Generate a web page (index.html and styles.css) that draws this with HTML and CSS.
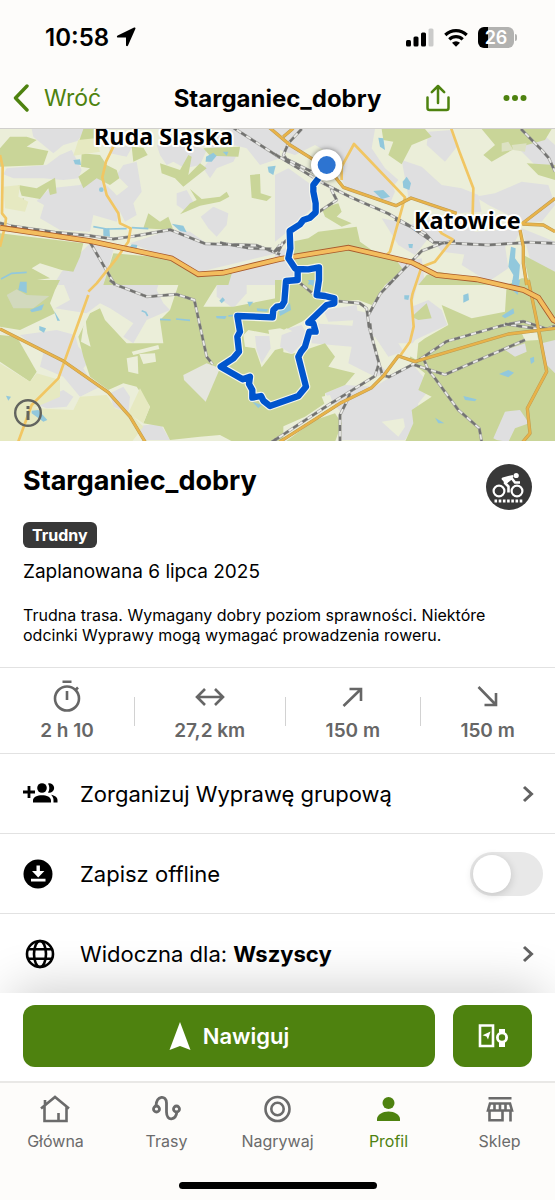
FILE: index.html
```html
<!DOCTYPE html>
<html lang="pl">
<head>
<meta charset="utf-8">
<meta name="viewport" content="width=device-width, initial-scale=1">
<title>Starganiec_dobry</title>
<link rel="stylesheet" href="styles.css">
</head>
<body>
<div class="screen">
  <header class="top">
    <div class="status">
      <div class="status-left">
        <span class="clock">10:58</span>
        <svg width="20" height="20" viewBox="0 0 20 20"><path d="M19.200.8c.5.300.3.800 0 1.500L12 18.600c-.4.900-2 .7-2-.3V10.600H2.200c-1.500 0-1.800-1.600-.5-2.200L17.600.8c.8-.4 1.300-.3 1.600 0z"/></svg>
      </div>
      <div class="status-right">
        <svg width="28" height="19" viewBox="0 0 28 19"><rect x="0" y="12" width="5" height="6.500" rx="1.500"/><rect x="7.500" y="8.500" width="5" height="10" rx="1.500"/><rect x="15" y="4.500" width="5" height="14" rx="1.500"/><rect x="22.500" y="0.500" width="5" height="18" rx="1.500" fill="#cbcbca"/></svg>
        <svg width="24" height="19" viewBox="0 0 24 19"><g fill="none" stroke="#000" stroke-width="3.200"><path d="M1.300 7A15.500 15.500 0 0 1 22.700 7"/><path d="M5.300 11.300a9.700 9.700 0 0 1 13.400 0"/></g><path d="M12 18.800 8 14.800a5.700 5.700 0 0 1 8 0z"/></svg>
        <span class="battery"><span class="battery-level">26</span></span>
      </div>
    </div>
    <nav class="navbar">
      <button class="back" type="button">
        <svg width="16" height="28" viewBox="0 0 16 28"><path d="M14 2 2.500 14 14 26" fill="none" stroke="currentColor" stroke-width="3.400" stroke-linecap="round" stroke-linejoin="round"/></svg>
        <span>Wróć</span>
      </button>
      <h1 class="nav-title">Starganiec_dobry</h1>
      <div class="nav-actions">
        <button type="button" aria-label="Udostępnij"><svg width="24" height="28" viewBox="0 0 24 28"><g fill="none" stroke="currentColor" stroke-width="2.500" stroke-linejoin="round" stroke-linecap="round"><path d="M1.500 13.500V24a2 2 0 0 0 2 2h17a2 2 0 0 0 2-2V13.500M12 19V2M5.800 8.200 12 2l6.200 6.200"/></g></svg></button>
        <button type="button" aria-label="Więcej"><svg width="24" height="8" viewBox="0 0 24 8"><g fill="currentColor"><circle cx="3.500" cy="4" r="3"/><circle cx="12" cy="4" r="3"/><circle cx="20.500" cy="4" r="3"/></g></svg></button>
      </div>
    </nav>
  </header>

  <main>
    <section class="map" aria-label="Mapa trasy">
      <svg class="map-canvas" viewBox="0 387 1665 936" preserveAspectRatio="xMidYMid slice">
        <rect y="380" width="1665" height="950" fill="#ebeed9"/>
        <g class="town">
          <g transform="translate(0 375)">
            <path d="M95 12 260 12 232 48 190 60 160 85 130 60 100 35z"/>
            <path d="M20 130 140 120 180 90 215 75 245 135 235 160 190 165 130 160 95 160 40 160 10 148z"/>
            <path d="M150 190 240 180 285 150 340 200 370 235 350 290 280 270 270 320 180 315 120 280 132 240 110 228z"/>
            <path d="M350 150 370 120 410 110 425 200 400 235 410 270 375 290 340 220 385 185z"/>
            <path d="M320 40 350 70 400 60 380 95 330 85z"/>
            <path d="M470 60 560 55 620 75 600 120 555 130 520 110 500 120 480 90z"/>
            <path d="M620 15 690 12 840 12 840 100 780 120 740 70 700 60 670 90 620 60z"/>
            <path d="M640 90 720 70 700 110 650 130 630 160 610 130z"/>
            <path d="M530 205 560 195 580 230 560 260 530 240z"/>
            <path d="M602 275 640 245 685 265 680 300 650 335 625 310z"/>
            <path d="M390 355 510 315 570 320 620 355 760 360 830 385 600 440 510 400z"/>
            <path d="M185 440 270 355 340 375 310 480 160 480z"/>
            <path d="M700 430 840 395V480H680z"/>
          </g>
          <g transform="translate(825 375)">
            <path d="M0 12 300 12 290 70 330 130 370 165 350 190 210 180 190 100 120 60 60 90 0 70z"/>
            <path d="M0 150 40 130 110 180 110 250 50 310 0 350z"/>
            <path d="M170 110 230 75 330 130 360 200 345 235 220 200z"/>
            <path d="M460 20 530 15 550 60 510 110 455 60z"/>
            <path d="M380 105 440 125 500 180 560 190 610 210 620 260 540 265 470 250 400 215z"/>
            <path d="M600 215 660 205 740 170 820 180 840 240 800 290 740 290 640 240z"/>
            <path d="M690 30 790 15 840 60 840 130 780 120z"/>
            <path d="M400 300 520 270 600 320 740 310 720 350 620 395 500 380 470 340z"/>
            <path d="M570 380 690 360 700 430 640 470 560 420z"/>
            <path d="M320 280 420 300 460 340 420 390 370 360z"/>
            <path d="M740 310 840 350 840 470 770 420z"/>
            <path d="M0 385 40 365 65 440 65 480 0 480z"/>
            <path d="M330 480 370 415 440 400 450 480z"/>
          </g>
          <g transform="translate(0 840)">
            <path d="M190 10 380 0 480 0 470 30 490 70 510 90 440 120 400 190 370 170 400 130 330 85 300 70 260 100 165 85 210 60z"/>
            <path d="M60 165 170 150 225 165 235 200 270 240 250 265 270 300 300 320 240 350 190 290 120 260 130 220z"/>
            <path d="M100 370 190 330 220 350 200 380 140 385z"/>
            <path d="M330 340 370 320 390 350 385 400 340 380z"/>
            <path d="M400 440 480 430 510 480 430 480z"/>
            <path d="M650 0 740 0 740 40 700 85 650 50z"/>
            <path d="M0 205 20 210 0 225z"/>
          </g>
          <g transform="translate(825 840)">
            <path d="M350 0 430 0 410 80 460 60 500 90 517 135 420 180 400 210 340 230 300 170 260 180 230 150 240 90 280 100z"/>
            <path d="M0 155 80 135 100 170 50 220 20 200z"/>
            <path d="M145 90 245 75 250 120 160 125z"/>
            <path d="M110 130 280 140 310 250 340 280 300 290 220 250 230 200 110 190z"/>
            <path d="M150 340 210 315 300 320 410 250 470 320 430 370 420 430 390 480 200 480 200 400z"/>
          </g>
        </g>
        <g class="wood">
          <g transform="translate(0 375)">
            <path d="M0 70 30 35 80 35 110 45 80 65 145 78 130 120 0 125z"/>
            <path d="M55 180 110 190 165 158 170 205 150 210 145 190 120 222 65 212z"/>
            <path d="M40 230 72 220 68 245 45 248z"/>
            <path d="M245 85 300 90 320 120 350 135 358 160 330 180 290 160 250 190 235 155 270 130 243 125z"/>
            <path d="M250 12 290 12 280 60 235 55z"/>
            <path d="M395 65 430 68 443 90 400 110z"/>
            <path d="M480 115 540 135 565 90 575 95 565 150 600 115 620 130 550 185 525 160 485 145z"/>
            <path d="M570 192 605 222 660 215 680 200 688 215 660 230 600 242 540 268 570 235 590 225z"/>
            <path d="M750 150 780 147 782 205 815 215 800 228 755 218z"/>
            <path d="M610 70 720 65 715 95 630 92z"/>
            <path d="M430 310 445 265 480 290 505 275 520 315z"/>
            <path d="M0 325 250 355 240 395 220 440 185 435 120 415 95 430 150 460 0 480z"/>
            <path d="M340 385 515 400 600 445 700 430 685 480 310 480z"/>
          </g>
          <g transform="translate(825 375)">
            <path d="M320 12 450 12 470 35 410 60 380 118 340 90 355 50 325 45z"/>
            <path d="M620 12 830 12 810 45 720 70 650 110 625 90 660 60z"/>
            <path d="M755 115 840 120 840 165 790 150z"/>
            <path d="M150 275 140 250 190 235 200 260 185 275 230 295 200 305z"/>
            <path d="M50 350 100 340 130 320 245 305 255 350 290 375 360 400 385 435 330 480 60 480z"/>
            <path d="M455 450 490 440 700 480 430 480z"/>
            <path d="M745 390 840 440 840 480 765 480z"/>
          </g>
          <g transform="translate(0 840)">
            <path d="M0 0 180 0 165 30 150 70 165 100 60 150 0 140z"/>
            <path d="M0 165 50 170 90 240 110 275 90 305 0 245z"/>
            <path d="M270 100 300 85 315 120 380 190 490 190 480 120 510 90 540 0 660 0 610 80 700 80 850 50 850 486H700L660 465 600 470 510 480 490 440 430 430 450 380 410 320 370 310 325 330 270 290 250 230 235 170z"/>
            <path d="M160 455 175 450 170 486 155 470z"/>
            <path d="M350 460 360 450 358 486h-8z"/>
          </g>
          <g transform="translate(825 840)">
            <path d="M0 0 340 0 290 75 250 60 180 65 120 100 80 125 0 165z"/>
            <path d="M0 190 20 215 50 222 90 210 150 190 180 230 160 260 240 280 210 315 150 340 150 370 90 410 0 450z"/>
            <path d="M450 175 520 135 500 75 590 115 690 95 695 15 740 -5 840 -5 840 486 390 486 415 430 410 390 470 350 430 330 450 280 400 240 430 190z"/>
            <path d="M410 110 455 70 470 115 430 120z"/>
            <path d="M120 420 180 400 200 430 180 486 30 486z"/>
          </g>
        </g>
        <g class="field">
          <g transform="translate(0 375)">
            <path d="M10 185 60 180 55 215 85 230 75 260 15 250z"/>
            <path d="M235 45 285 40 300 80 220 92z"/>
          </g>
          <g transform="translate(0 840)">
            <path d="M0 250 90 305 110 280 180 300 180 350 100 385 220 390 240 350 320 345 345 385 390 400 430 440 395 486H0z"/>
            <path d="M385 400 420 325 450 380 430 430z"/>
          </g>
        </g>
        <g class="glade">
          <g transform="translate(0 840)">
            <path d="M243 185 255 105 262 160 272 200z"/>
            <path d="M395 215 475 195 478 207 400 225z"/>
            <path d="M380 235 413 228 415 282 385 275z"/>
            <path d="M418 222 465 220 468 245 430 252z"/>
            <path d="M550 285 620 250 660 265 617 365 552 300z" fill="#e5e6de"/>
            <path d="M20 45 50 28 80 45 148 48 100 85 40 85z" fill="#d2d9bd"/>
            <path d="M730 165 745 150 825 165 860 145 890 160 845 205 825 210 785 262 765 205 735 200z"/>
            <path d="M805 150 840 145 870 155 840 172 808 165z"/>
          </g>
          <g transform="translate(825 840)">
            <path d="M320 425 385 415 390 440 370 470z"/>
            <path d="M140 350 165 345 180 385 150 375z"/>
            <path d="M370 190 430 190 425 240 390 220z"/>
            <path d="M740 158 785 155 790 180 750 182z"/>
          </g>
          <path d="M1505 430 1525 425 1540 450 1505 455z M1535 435 1580 430 1575 455 1540 450z" fill="#dce1c2"/>
        </g>
        <g class="town">
          <path d="M765 1008 808 1008 812 1045 785 1090 770 1050z"/>
          <g transform="translate(825 840)">
            <path d="M20 165 75 145 95 175 50 222 15 200z"/>
            <path d="M655 475 690 395 735 390 762 430 720 445 700 486 665 480z"/>
            <path d="M690 210 750 190 755 215 720 230z"/>
            <path d="M800 190 840 180 840 280 810 250z"/>
          </g>
        </g>
        <g class="water">
          <g transform="translate(0 375)">
            <path d="M220 105 240 103 243 120 225 118z"/><circle cx="304" cy="194" r="7"/>
            <path d="M618 95 640 83 650 92 635 110 617 110z"/><path d="M668 80 685 80 680 92z"/><path d="M803 125 827 122 820 150 806 142z"/>
            <path d="M515 296 550 302 560 322 540 318z"/><path d="M395 358 412 360 410 370 390 366z"/><path d="M310 312 328 310 330 335 310 332z"/>
            <path d="M280 305 320 312 380 311M395 308 445 311M3 462 35 445 80 442" class="stream"/>
          </g>
          <g transform="translate(825 375)">
            <path d="M310 38 325 40 330 75 315 65z"/><path d="M383 170 395 155 408 175 403 195 385 188z"/><path d="M295 198 325 195 345 215 320 222z"/>
            <path d="M400 357 414 357 412 370 402 368z"/><path d="M708 365 722 370 720 400 735 420 730 480 710 480 715 450 700 425z"/>
            <path d="M105 465 115 465 112 480 98 478z"/>
          </g>
          <g transform="translate(0 840)">
            <path d="M60 5 80 5 80 40 55 30z"/><path d="M90 90 132 72 125 90 95 97z"/><path d="M162 92 180 122 172 122z"/><path d="M118 138 138 145 132 158 118 150z"/>
            <path d="M95 392 115 390 142 420 130 425 95 400z"/><path d="M18 347 33 350 25 362z"/><path d="M658 62 668 52 675 60 665 70z"/><path d="M742 65 760 65 748 80z"/>
            <path d="M648 108 680 108 675 117 650 115z"/><path d="M770 85 805 88 800 95 772 93z"/><path d="M757 365 785 375 775 385z"/>
            <path d="M425 92 437 97 443 108M480 118 512 120M528 117 570 121M685 108 700 106" class="stream"/>
          </g>
          <g transform="translate(825 840)">
            <path d="M10 80 45 70 48 90 15 108z"/><path d="M98 0 118 0 115 20z"/><path d="M388 46 403 46 400 60 388 58z"/><path d="M565 45 580 40 582 60 565 68z"/>
            <path d="M680 108 715 85 718 100 690 115z"/><path d="M765 235 777 230 778 245 768 252z"/><path d="M672 282 700 270 717 278 700 292z"/>
            <path d="M565 348 605 358 600 364 570 360z"/><path d="M480 413 508 430 490 430z"/><path d="M712 0 735 0 728 45 712 30z"/>
          </g>
        </g>

        <defs>
          <g id="rails">
            <path transform="translate(0 375)" d="M0 294 30 302 165 322 260 331 340 342 400 334 510 314 615 356 770 361 840 388M660 353 750 370 815 372M822 382 840 360M270 352 345 480M695 5 840 98"/>
            <path transform="translate(825 375)" d="M0 88 145 175 230 218 340 266 400 300 475 352 640 360 760 352 840 355M30 100 80 125 130 150M80 12 40 55 25 90 40 110M130 262 185 225 168 192M360 283 450 325 475 352M540 348 500 355 440 378 340 480M738 12 800 75 822 100 840 140M0 380 35 345M10 380 25 350"/>
            <path transform="translate(0 840)" d="M330 0 345 13 440 50 530 43 583 60 620 230 638 253M815 486 840 470"/>
            <path transform="translate(825 840)" d="M70 5 115 42M185 63 255 70 275 85 282 140 312 250 300 288 160 375 0 480M285 130 290 170 315 260 322 285 342 291 410 255 515 184 680 137 745 124 815 147 840 138M355 0 315 42 280 105M690 132 800 148M750 180 510 284 460 268 410 252M445 235 460 270 480 295 550 390 613 445 620 486M225 340 215 365 195 405 195 486"/>
          </g>
          <path id="mains" d="M0 987 190 1083 325 1177 390 1250 438 1330M805 380 870 435 950 485 1005 530 1030 562 1188 617 1233 594 1370 640M850 410 880 385M1565 672 1665 595M1567 672 1630 675 1665 695M1560 690 1570 740 1570 790 1580 855M1585 840 1618 1000 1640 1115 1582 1225 1590 1300 1565 1330M1665 985 1525 1002 1245 1085 1195 1068 1150 1128 1115 1163 1020 1210 840 1325"/>
          <path id="highway" d="M0 683 270 723 515 775 595 823 670 818 840 777 1045 743 1235 787 1310 825 1430 838 1570 870 1615 893 1660 960 1680 970"/>
          <path id="route" d="M128-302 115-285 115-265 122-230 122-203 105-187 85-180 75-167 44-147 46-95 40-65 60-35 68-30 68 0 33 3 28 65 20 78 5 80-5 90-7 112-113 108-105 155-113 170-108 215-125 235-163 260-97 298-75 290-78 312-68 330-68 353-42 348-35 362-15 378 70 348 93 320 70 230 78 215 90 200 103 155 122 155 115 130 100 128 155 75 178 70 178 55 150 48 125 45 132 0 132-38 100-32 66-33"/>
        </defs>

        <use href="#rails" class="rail"/>
        <use href="#rails" class="rail-core"/>
        <use href="#rails" class="rail-dash"/>

        <path class="road" d="M0 465 8 500 6 640 18 655 15 680 5 720 0 740M340 440 318 485 307 532 320 585 355 640 360 670 392 685 385 725 350 775 290 850 265 875M265 885 175 1135 95 1215 53 1330"/>
        <path class="road" d="M1025 540 1025 500 1062 432 1215 592 1170 755 1155 770 1175 772M1350 375 1380 460 1420 565 1418 645M1310 680 1325 700 1358 718 1305 785 1265 800 1238 880 1234 900 1241 980 1230 1025 1200 1068M1260 790 1245 800"/>
        <use href="#mains" class="main-edge"/>
        <use href="#mains" class="main-road"/>
        <use href="#highway" class="highway-edge"/>
        <use href="#highway" class="highway"/>

        <use href="#route" x="825" y="840" class="route-halo"/>
        <use href="#route" x="825" y="840" class="route"/>
        <g class="start"><circle cx="980" cy="495" r="47" fill="#fff"/><circle cx="980" cy="495" r="27" fill="#2d74d1"/></g>
        <g class="place">
          <text x="491" y="434">Ruda Śląska</text>
          <text x="1402" y="687">Katowice</text>
        </g>
      </svg>
      <button class="map-info" type="button" aria-label="Informacje o mapie">
        <svg width="30" height="30" viewBox="0 0 30 30"><circle cx="15" cy="15" r="12.800" fill="none" stroke="#62645f" stroke-width="2.400"/><path d="M13.500 8h3v3h-3zM13.500 13h3v9h-3z" fill="#62645f"/></svg>
      </button>
    </section>

    <section class="summary">
      <div class="summary-head">
        <h2>Starganiec_dobry</h2>
        <svg class="sport" width="46" height="46" viewBox="0 0 46 46"><circle cx="23" cy="23" r="23" fill="#383838"/><g fill="none" stroke="#fff"><circle cx="13" cy="27" r="5.400" stroke-width="2.200"/><circle cx="31" cy="27" r="5.400" stroke-width="2.200"/><path d="M22.500 28.500v-6l-3.500-3.500 6.500-5 3.500 4.500h5" stroke-width="2.600" stroke-linejoin="round"/><path d="M17 14.800 26 12.500" stroke-width="2.800" stroke-linecap="round"/><path d="M8.500 37h28" stroke-width="2.800" stroke-dasharray="2.600 1.600"/></g><path d="M16.500 16 23 14l2 2-5.500 4.500z" fill="#fff"/><circle cx="30.200" cy="11.500" r="2.600" fill="#fff"/></svg>
      </div>
      <span class="badge">Trudny</span>
      <p class="planned">Zaplanowana 6 lipca 2025</p>
      <p class="note">Trudna trasa. Wymagany dobry poziom sprawności. Niektóre odcinki Wyprawy mogą wymagać prowadzenia roweru.</p>
    </section>

    <ul class="stats">
      <li>
        <svg width="32" height="32" viewBox="0 0 32 32"><g fill="none" stroke="currentColor" stroke-width="2.600"><circle cx="16" cy="18.500" r="12"/><path d="M11.500 1.800h9M16 11v9M24.500 10l2.500-2.500"/></g></svg>
        <span>2 h 10</span>
      </li>
      <li>
        <svg width="32" height="32" viewBox="0 0 32 32"><path d="M3.500 17h25M11 9l-8 8 8 8M21 9l8 8-8 8" fill="none" stroke="currentColor" stroke-width="2.600"/></svg>
        <span>27,2 km</span>
      </li>
      <li>
        <svg width="32" height="32" viewBox="0 0 32 32"><path d="M6.500 26 24 9M12.500 9H24v12" fill="none" stroke="currentColor" stroke-width="2.600"/></svg>
        <span>150 m</span>
      </li>
      <li>
        <svg width="32" height="32" viewBox="0 0 32 32"><path d="M6.500 7 24 25M12.500 25H24V13" fill="none" stroke="currentColor" stroke-width="2.600"/></svg>
        <span>150 m</span>
      </li>
    </ul>

    <div class="options">
      <button class="option" type="button">
        <svg class="option-icon" width="36" height="30" viewBox="0 0 36 30"><path d="M6 7v12M0 13h12" stroke="#000" stroke-width="2.800"/><circle cx="19" cy="9" r="4.800"/><path d="M25 4.400a4.800 4.800 0 1 1 0 9.200c1.800-2.600 1.800-6.600 0-9.200zM10 23.500v-2c0-7 18-7 18 0v2zM28 15.800c3.500.6 6.500 2.400 6.500 5.200v2.500h-4V21c0-2-1-3.800-2.500-5.200z"/></svg>
        <span class="option-label">Zorganizuj Wyprawę grupową</span>
        <svg class="chevron" width="12" height="18" viewBox="0 0 12 18"><path d="M2 2l7.500 7L2 16" fill="none" stroke="#626262" stroke-width="3"/></svg>
      </button>
      <div class="option">
        <svg class="option-icon" width="36" height="30" viewBox="0 0 36 30"><circle cx="15" cy="15" r="14.500"/><path d="M13.500 6.500h3.400V12h4.500l-6.200 6.500L9 12h4.500zM8 19.700h14.500v2.800H8z" fill="#fff"/></svg>
        <label class="option-label" for="offline">Zapisz offline</label>
        <input class="toggle" type="checkbox" role="switch" id="offline">
      </div>
      <button class="option" type="button">
        <svg class="option-icon" width="36" height="30" viewBox="0 0 36 30"><g fill="none" stroke="#000" stroke-width="2.600"><circle cx="17" cy="15" r="13"/><ellipse cx="17" cy="15" rx="6" ry="13"/><path d="M5 10.300h24M5 19.700h24"/></g></svg>
        <span class="option-label">Widoczna dla: <b>Wszyscy</b></span>
        <svg class="chevron" width="12" height="18" viewBox="0 0 12 18"><path d="M2 2l7.500 7L2 16" fill="none" stroke="#626262" stroke-width="3"/></svg>
      </button>
    </div>
  </main>

  <div class="actions">
    <button class="primary" type="button">
      <svg width="22" height="30" viewBox="0 0 22 30"><path d="M11 1 21.500 29 11 25 .5 29z" fill="#fff"/></svg>
      <span>Nawiguj</span>
    </button>
    <button class="primary device" type="button" aria-label="Wyślij na urządzenie">
      <svg width="30" height="26" viewBox="0 0 30 26"><g fill="none" stroke="#fff"><path d="M2 2.500h13v20.500H2z" stroke-width="2.600"/><circle cx="24" cy="14.500" r="4.600" stroke-width="2.800"/></g><path d="M4.500 12.300 12.500 8.500 10 16.500 8.500 13.500zM21 6h6v4h-6zM21 19h6v5h-6z" fill="#fff"/></svg>
    </button>
  </div>

  <nav class="tabs">
    <a href="#glowna"><svg width="32" height="30" viewBox="0 0 32 30"><path d="M1 14.500 15 3l14 11.500M4.500 12v15h22V12M5 11V6M18.500 27v-8" fill="none" stroke="currentColor" stroke-width="2.600"/></svg><span>Główna</span></a>
    <a href="#trasy"><svg width="32" height="30" viewBox="0 0 32 30"><g fill="none" stroke="currentColor" stroke-width="2.800"><circle cx="5.500" cy="15" r="3"/><circle cx="25.500" cy="15" r="3"/><path d="M5 12C5.500 1 15.500 1 15.500 9v9c0 9.500 9.500 9 10.500-1"/></g></svg><span>Trasy</span></a>
    <a href="#nagrywaj"><svg width="32" height="30" viewBox="0 0 32 30"><g fill="none" stroke="currentColor" stroke-width="2.600"><circle cx="15.500" cy="15" r="12"/><circle cx="15.500" cy="15" r="6.200"/></g></svg><span>Nagrywaj</span></a>
    <a href="#profil" class="active" aria-current="page"><svg width="32" height="30" viewBox="0 0 32 30"><g fill="currentColor"><circle cx="15.500" cy="9" r="6"/><path d="M4 27v-2c0-4 5.500-7.500 11.500-7.500S27 21 27 25v2z"/></g></svg><span>Profil</span></a>
    <a href="#sklep"><svg width="32" height="30" viewBox="0 0 32 30"><g fill="none" stroke="currentColor" stroke-width="2.600"><path d="M4.500 4.300h23M6 9.500h20l2 7H4zM10.500 9.500v7M16 9.500v7M21.500 9.500v7M5.500 16.500v9.700h13v-9.700M26.500 16.500v11"/></g></svg><span>Sklep</span></a>
  </nav>
  <div class="home"><span></span></div>
</div>
</body>
</html>
```
FILE: styles.css
```css
* { box-sizing: border-box; }
body, h1, h2, p, ul { margin: 0; padding: 0; }
body { font-family: Inter, "Liberation Sans", sans-serif; color: #000; background: #fff; }
button { font: inherit; color: inherit; background: none; border: 0; padding: 0; cursor: pointer; }
svg { display: block; flex: none; }

.screen { display: flex; flex-direction: column; min-height: 100vh; }
main { flex: 1 0 auto; }

.top { background: #fdfcfa; border-bottom: 1px solid #d0cfcc; }
.status { display: flex; justify-content: space-between; align-items: center; height: 68px; padding: 6px 41px 0 45px; }
.status-left { display: flex; align-items: center; gap: 7px; }
.clock { font-size: 24px; font-weight: 600; }
.status-right { display: flex; align-items: center; gap: 10px; }
.battery { position: relative; width: 36px; height: 21px; border-radius: 6px; background: linear-gradient(90deg, #000 10px, #b2b2b0 10px); }
.battery::after { content: ""; position: absolute; left: 37px; top: 7px; width: 2px; height: 7px; border-radius: 0 2px 2px 0; background: #b2b2b0; }
.battery-level { display: block; text-align: center; font-size: 18px; line-height: 21px; font-weight: 600; color: #fff; }

.navbar { display: grid; grid-template-columns: 1fr auto 1fr; align-items: center; height: 60px; padding: 0 13px; color: #4e820f; }
.back { display: flex; align-items: center; gap: 15px; font-size: 23px; }
.nav-title { font-size: 24px; font-weight: 700; color: #000; }
.nav-actions { display: flex; justify-content: flex-end; align-items: center; gap: 53px; padding-right: 15px; }

.map { position: relative; }
.map-canvas { width: 100%; height: auto; aspect-ratio: 555 / 312; }
.map-info { position: absolute; left: 13px; bottom: 13px; }
.town { fill: #dfdfe0; }
.wood { fill: #c9d598; }
.field { fill: #e6e9c1; }
.glade { fill: #ebeed9; }
.water { fill: #92c8dc; }
.stream { fill: none; stroke: #92c8dc; stroke-width: 5; }
.rail { fill: none; stroke: #a3a3a0; stroke-width: 9; stroke-linejoin: round; }
.rail-core { fill: none; stroke: #ebebe8; stroke-width: 5; }
.rail-dash { fill: none; stroke: #737371; stroke-width: 7; stroke-dasharray: 18 16; }
.road { fill: none; stroke: #f1c663; stroke-width: 8; stroke-linejoin: round; }
.main-edge { fill: none; stroke: #bd9a50; stroke-width: 10; stroke-linejoin: round; }
.main-road { fill: none; stroke: #e8b34a; stroke-width: 7; stroke-linejoin: round; }
.highway-edge { fill: none; stroke: #a95a2c; stroke-width: 17; }
.highway { fill: none; stroke: #f3bd5e; stroke-width: 12; }
.route-halo { fill: none; stroke: #f4f6ee; stroke-width: 26; stroke-linejoin: round; stroke-linecap: round; }
.route { fill: none; stroke: #0055cd; stroke-width: 19; stroke-linejoin: round; stroke-linecap: round; }
.start { filter: drop-shadow(0 0 8px rgba(0, 0, 0, .5)); }
.place { font-family: "Noto Sans", sans-serif; font-size: 70px; font-weight: 700; text-anchor: middle; fill: #000; stroke: #fff; stroke-width: 12px; stroke-linejoin: round; paint-order: stroke; }

.summary { padding: 23px 23px 22px; }
.summary-head { display: flex; justify-content: space-between; align-items: flex-start; }
.summary h2 { font-size: 27px; line-height: 34px; font-weight: 700; }
.badge { display: table; margin-top: 12px; padding: 0 9px; border-radius: 6px; background: #383838; color: #fff; font-size: 16px; line-height: 26px; font-weight: 700; }
.planned { margin-top: 12px; font-size: 19px; line-height: 24px; }
.note { margin-top: 21px; font-size: 16px; line-height: 20px; }

.stats { display: flex; list-style: none; padding: 12px 0 11px; border-top: 1px solid #e2e2e2; color: #666; }
.stats li { position: relative; flex: 1 1 auto; display: flex; flex-direction: column; align-items: center; gap: 8px; font-size: 19px; line-height: 22px; font-weight: 600; }
.stats li + li::before { content: ""; position: absolute; left: 0; top: 17px; height: 29px; width: 1px; background: #d2d2d2; }

.option { display: flex; align-items: center; width: 100%; height: 80px; padding: 0 12px 0 23px; border-top: 1px solid #e2e2e2; text-align: left; font-size: 22px; }
.option-icon { margin-right: 21px; }
.option-label { flex: 1; }
.chevron { margin-right: 9px; }
.toggle { appearance: none; position: relative; margin: 0; width: 73px; height: 44px; border-radius: 22px; background: #e8e8e8; }
.toggle::before { content: ""; position: absolute; left: 3px; top: 3px; width: 38px; height: 38px; border-radius: 50%; background: #fff; box-shadow: 0 2px 8px rgba(0, 0, 0, .16); }
.toggle:checked { background: #4e820f; }
.toggle:checked::before { left: 32px; }

.actions { position: relative; display: flex; gap: 18px; padding: 12px 23px 14px; background: #fff; box-shadow: 0 -16px 50px -12px rgba(0, 0, 0, .2); }
.primary { flex: 1; display: flex; justify-content: center; align-items: center; gap: 12px; height: 62px; border-radius: 12px; background: #4e820f; color: #fff; font-size: 22px; font-weight: 600; }
.device { flex: 0 0 79px; }

.tabs { position: relative; display: grid; grid-template-columns: repeat(5, 1fr); padding-top: 11px; background: #fdfcfa; border-top: 2px solid #e9e8e6; }
.tabs a { display: flex; flex-direction: column; align-items: center; gap: 7px; color: #6b6b6b; font-size: 16px; line-height: 20px; text-decoration: none; }
.tabs .active { color: #4e820f; }
.home { position: relative; display: flex; justify-content: center; padding: 31px 0 14px; background: #fdfcfa; }
.home span { width: 198px; height: 7px; border-radius: 4px; background: #000; }
```
